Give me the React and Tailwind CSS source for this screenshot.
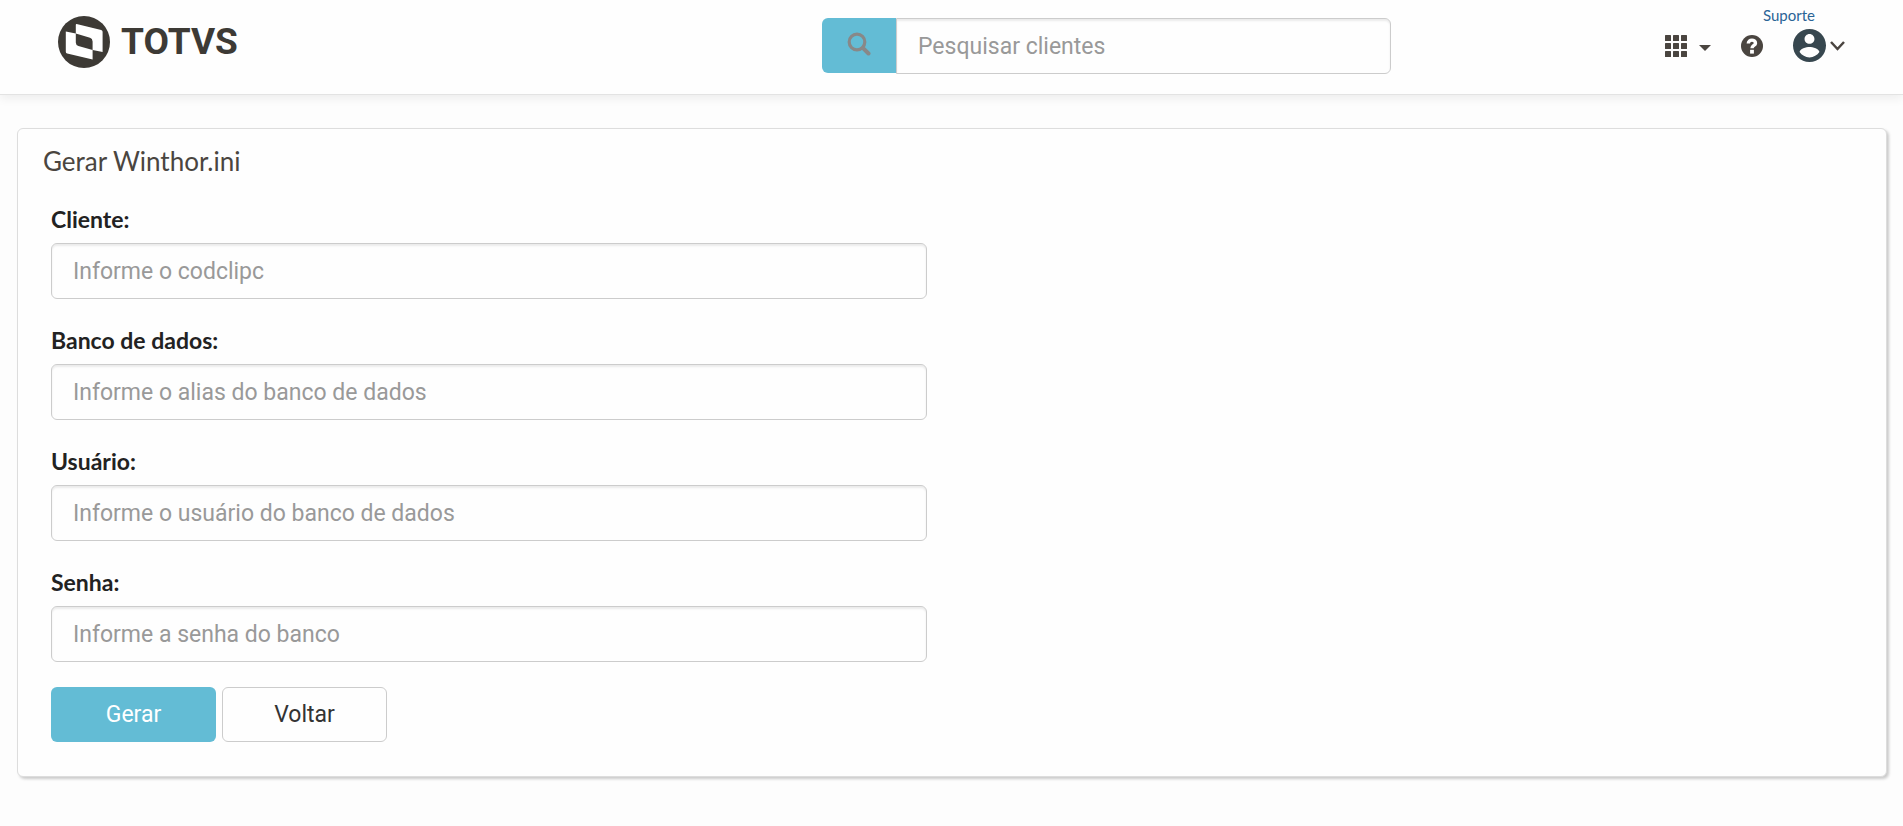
import React from 'react';

const fields = [
  { id: 'cliente', label: 'Cliente:', placeholder: 'Informe o codclipc', type: 'text' },
  { id: 'banco', label: 'Banco de dados:', placeholder: 'Informe o alias do banco de dados', type: 'text' },
  { id: 'usuario', label: 'Usuário:', placeholder: 'Informe o usuário do banco de dados', type: 'text' },
  { id: 'senha', label: 'Senha:', placeholder: 'Informe a senha do banco', type: 'password' },
];

const Logo = () => (
  <a href="#" className="flex items-center gap-[11px] text-[#3d3a35]">
    <svg viewBox="0 0 52 52" className="h-[52px] w-[52px]" aria-hidden="true">
      <circle cx="26" cy="26" r="26" fill="currentColor" />
      <path
        fill="#fff"
        fillRule="evenodd"
        d="M18.6 8 L43.2 14 Q44.6 14.400 44.6 15.800 V36 L34.600 34 V43.6 L9.200 37.600 Q7.800 37.200 7.800 35.800 V15.400 L17.800 17.600 V9 Q17.800 7.900 18.600 8 Z M17.800 17.600 V26.500 Q17.900 29.300 20.400 30.100 L34.600 34 V25.400 Q34.500 22.600 32 21.700 Z"
      />
    </svg>
    <span className="font-['Roboto',sans-serif] text-[37px] leading-[52px] font-bold">TOTVS</span>
  </a>
);

const SearchBar = () => (
  <form className="flex h-14" onSubmit={(e) => e.preventDefault()}>
    <button
      type="submit"
      aria-label="Pesquisar"
      className="flex h-[55px] w-[74px] shrink-0 items-center justify-center rounded-l-md bg-[#63bcd5] pb-1 text-[#888]"
    >
      <svg viewBox="0 0 24 24" className="h-6 w-6" fill="none" stroke="currentColor" aria-hidden="true">
        <circle cx="10" cy="10" r="7.800" strokeWidth="3.200" />
        <path d="M15.800 15.800 L21.500 21.500" strokeWidth="4" strokeLinecap="round" />
      </svg>
    </button>
    <input
      type="text"
      aria-label="Pesquisar clientes"
      placeholder="Pesquisar clientes"
      className="min-w-0 flex-1 rounded-r-md border border-[#ccc] bg-[#fefefe] px-[21px] pt-0.5 font-['Roboto',sans-serif] text-[23px] text-[#333] shadow-[inset_0_2px_2px_rgba(0,0,0,0.075)] placeholder:text-[#999]"
    />
  </form>
);

const UserArea = () => (
  <div className="flex items-center justify-end pr-[58px] text-[#4a4540]">
    <button type="button" aria-label="Aplicativos" className="flex items-center gap-3">
      <svg viewBox="0 0 22 22" className="h-[22px] w-[22px]" fill="currentColor" aria-hidden="true">
        {[0, 8, 16].map((y) =>
          [0, 8, 16].map((x) => <rect key={`${x}-${y}`} x={x} y={y} width="6" height="6" rx="0.5" />)
        )}
      </svg>
      <svg viewBox="0 0 12 6" className="mt-1 h-1.5 w-3" fill="currentColor" aria-hidden="true">
        <path d="M0 0 H12 L6 6 Z" />
      </svg>
    </button>
    <button type="button" aria-label="Ajuda" className="ml-[30px]">
      <svg viewBox="0 0 22 22" className="block h-[22px] w-[22px]" aria-hidden="true">
        <circle cx="11" cy="11" r="11" fill="currentColor" />
        <path
          d="M7.300 8.600 C7.300 4 14.500 4 14.500 8.200 C14.500 10.600 11 10.400 11 13.300"
          fill="none"
          stroke="#fff"
          strokeWidth="3.400"
        />
        <rect x="9.100" y="14.800" width="3.800" height="3.800" fill="#fff" />
      </svg>
    </button>
    <div className="relative ml-[30px]">
      <a
        href="#"
        className="absolute right-[30px] bottom-full mb-1 font-['Lato',sans-serif] text-[15px] leading-5 text-[#2a6496]"
      >
        Suporte
      </a>
      <button type="button" aria-label="Conta" className="flex items-center gap-1">
        <svg viewBox="2 2 20 20" className="h-[33px] w-[33px] text-[#37474f]" fill="currentColor" aria-hidden="true">
          <path d="M12 2C6.480 2 2 6.480 2 12s4.480 10 10 10 10-4.480 10-10S17.520 2 12 2zm0 3c1.660 0 3 1.340 3 3s-1.340 3-3 3-3-1.340-3-3 1.340-3 3-3zm0 14.200c-2.500 0-4.710-1.280-6-3.220.030-1.990 4-3.080 6-3.080 1.990 0 5.970 1.090 6 3.080-1.290 1.940-3.500 3.220-6 3.220z" />
        </svg>
        <svg viewBox="0 0 15 10" className="h-2.5 w-[15px]" fill="none" stroke="currentColor" strokeWidth="2.500" aria-hidden="true">
          <path d="M1 1 L7.500 8 L14 1" />
        </svg>
      </button>
    </div>
  </div>
);

const App = () => {
  return (
    <div className="min-h-screen bg-[#fdfdfd] font-['Lato',sans-serif]">
      <header className="grid grid-cols-[822fr_569fr_512fr] items-start border-b border-[#e3e3e3] bg-[#fefefe] pt-4 pb-5 shadow-[0_3px_10px_rgba(0,0,0,0.07)]">
        <div className="pl-[58px]">
          <Logo />
        </div>
        <div className="pt-0.5">
          <SearchBar />
        </div>
        <div className="pt-[13px]">
          <UserArea />
        </div>
      </header>

      <main className="pt-[33px] pr-4 pl-[17px]">
        <section className="rounded-md border border-[#ddd] bg-[#fefefe] px-[33px] pt-4 pb-[34px] shadow-[2px_2px_3px_rgba(0,0,0,0.2)]">
          <h1 className="-ml-2 text-[26px] leading-8 text-[#4a4540]">Gerar Winthor.ini</h1>

          <form className="mt-[26px] grid grid-cols-2 gap-[50px]" onSubmit={(e) => e.preventDefault()}>
            <div>
              {fields.map((field) => (
                <div key={field.id} className="mb-[25px]">
                  <label htmlFor={field.id} className="block pb-2 text-[23px] leading-8 font-bold text-[#222]">
                    {field.label}
                  </label>
                  <input
                    id={field.id}
                    type={field.type}
                    placeholder={field.placeholder}
                    className="block h-14 w-full rounded-md border border-[#ccc] bg-[#fefefe] px-[21px] font-['Roboto',sans-serif] text-[23px] text-[#333] shadow-[inset_0_2px_2px_rgba(0,0,0,0.075)] placeholder:text-[#999]"
                  />
                </div>
              ))}

              <div className="flex gap-1.5 font-['Roboto',sans-serif] text-[23px]">
                <button type="submit" className="h-[55px] w-[165px] rounded-md bg-[#63bcd5] pt-0.5 text-white">
                  Gerar
                </button>
                <button type="button" className="h-[55px] w-[165px] rounded-md border border-[#ccc] bg-[#fefefe] pt-0.5 text-[#333]">
                  Voltar
                </button>
              </div>
            </div>
          </form>
        </section>
      </main>
    </div>
  );
};

export default App;
